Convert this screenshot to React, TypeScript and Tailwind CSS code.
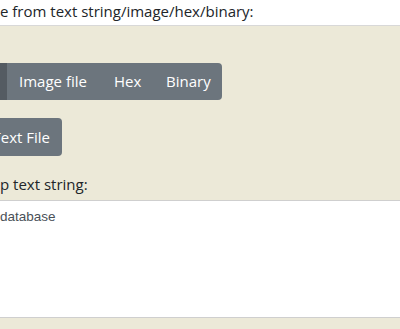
import React from "react";

export default function App() {
  const sans = { fontFamily: '"Open Sans", "Noto Sans", sans-serif' };
  return (
    <div className="w-[400px] h-[329px] overflow-hidden bg-[#ece9d8] text-[#212529] text-[15px]" style={sans}>
      <div className="h-[26px] bg-white border-b border-[#d8d8d8] leading-[23px] whitespace-nowrap">
        e from text string/image/hex/binary:
      </div>
      <div className="pt-[37px]">
        <div className="flex h-[37px]">
          <div className="w-[7px] bg-[#545b62]" />
          <div className="flex bg-[#6c757d] rounded-r-[4px] text-white leading-[37px]">
            <span className="w-[95px] pl-3">Image file</span>
            <span className="w-[52px] pl-3">Hex</span>
            <span className="w-[68px] pl-3">Binary</span>
          </div>
        </div>
        <div className="flex mt-[18px]">
          <div className="w-[62px] h-[38px] overflow-hidden rounded-r-[4px] bg-[#6c757d] text-white leading-[38px] flex justify-end pr-3 whitespace-nowrap">
            Text File
          </div>
        </div>
        <div className="mt-[16px] h-[24px] leading-[24px] whitespace-nowrap">p text string:</div>
        <div className="mt-[4px] h-[118px] bg-white border-y border-[#cfcfcf] pt-[7px] text-[13.5px] text-[#495057] leading-[18px]" style={{ fontFamily: '"Liberation Sans", Arial, sans-serif' }}>
          database
        </div>
      </div>
    </div>
  );
}
